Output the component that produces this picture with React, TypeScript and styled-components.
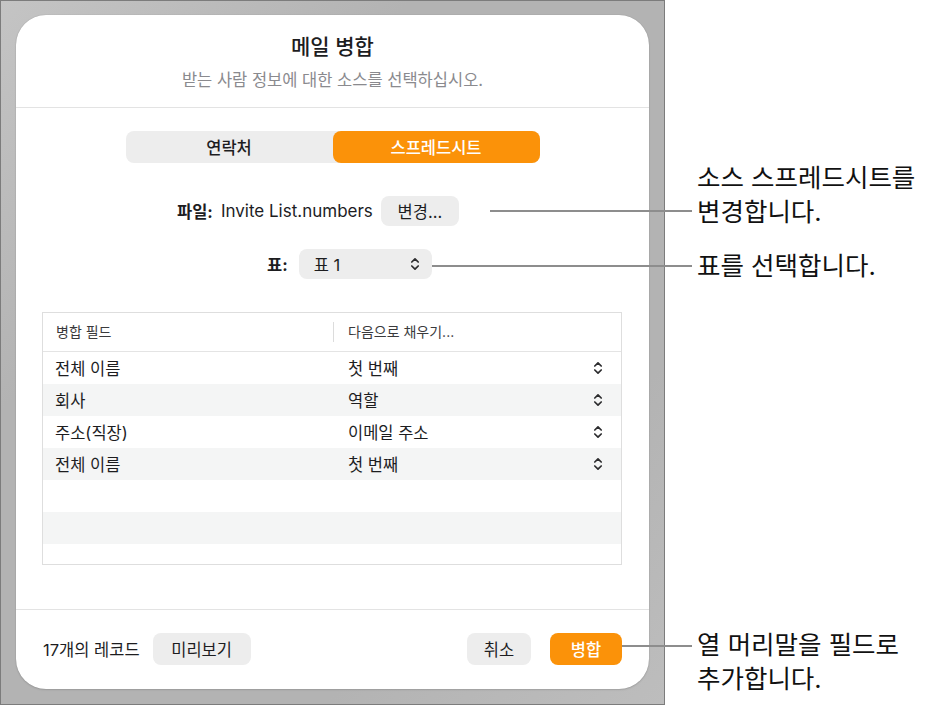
import React from "react";
import styled, { createGlobalStyle } from "styled-components";

const GlobalStyle = createGlobalStyle`
  html, body { margin: 0; padding: 0; background: #ffffff; }
  body {
    font-family: "Inter", "Noto Sans CJK KR", "Noto Sans", sans-serif;
    color: #1d1d1f;
    -webkit-font-smoothing: antialiased;
  }
`;

const Page = styled.div`
  position: relative;
  width: 928px;
  height: 705px;
  overflow: hidden;
`;

const Backdrop = styled.div`
  box-sizing: border-box;
  width: 665px;
  height: 705px;
  padding: 14px 15px 15px 15px;
  background: linear-gradient(135deg, #c4c4c4 0%, #b3b3b3 30%, #b3b3b3 75%, #bdbdbd 100%);
  border: 1px solid #7c7c7c;
`;

const Dialog = styled.div`
  box-sizing: border-box;
  width: 633px;
  height: 674px;
  background: #ffffff;
  border-radius: 30px;
  box-shadow: 0 0 1px rgba(0, 0, 0, 0.25), 0 1px 2px rgba(0, 0, 0, 0.12);
  display: flex;
  flex-direction: column;
  overflow: hidden;
`;

const Header = styled.header`
  display: flex;
  flex-direction: column;
  align-items: center;
  height: 93px;
  box-sizing: border-box;
  padding-top: 19px;
  border-bottom: 1px solid #e3e3e3;
`;

const Title = styled.h1`
  margin: 0;
  font-size: 21px;
  line-height: 26px;
  font-weight: 500;
  color: #1d1d1f;
`;

const Subtitle = styled.p`
  margin: 9px 0 0;
  font-size: 16.5px;
  line-height: 22px;
  color: #8a8a8e;
`;

const Body = styled.main`
  flex: 1;
  display: flex;
  flex-direction: column;
  padding: 23px 26px 0 26px;
`;

const Segmented = styled.div`
  align-self: center;
  display: grid;
  grid-template-columns: 1fr 1fr;
  width: 414px;
  height: 32px;
  background: #ededed;
  border-radius: 8px;
`;

const Segment = styled.button<{ $active?: boolean }>`
  border: none;
  margin: 0;
  padding: 0;
  font: inherit;
  font-size: 16.5px;
  font-weight: 500;
  border-radius: 8px;
  background: ${(p) => (p.$active ? "#fb9209" : "transparent")};
  color: ${(p) => (p.$active ? "#ffffff" : "#1d1d1f")};
`;

const FieldRow = styled.div<{ $indent: number; $top: number }>`
  display: flex;
  align-items: center;
  height: 30px;
  margin-top: ${(p) => p.$top}px;
  padding-left: ${(p) => p.$indent}px;
  font-size: 16.5px;
`;

const Label = styled.span<{ $gap: number }>`
  font-weight: 700;
  margin-right: ${(p) => p.$gap}px;
`;

const Value = styled.span`
  margin-right: 8px;
  font-size: 17px;
`;

const GrayButton = styled.button<{ $w: number; $h?: number }>`
  box-sizing: border-box;
  width: ${(p) => p.$w}px;
  height: ${(p) => p.$h ?? 30}px;
  border: none;
  border-radius: 8px;
  background: #ededed;
  color: #1d1d1f;
  font: inherit;
  font-size: 16.5px;
  padding: 0;
`;

const PopUp = styled.div`
  box-sizing: border-box;
  display: flex;
  align-items: center;
  justify-content: space-between;
  width: 133px;
  height: 30px;
  padding: 0 12px 0 15px;
  border-radius: 8px;
  background: #ededed;
  font-size: 16.5px;
`;

const Table = styled.div`
  box-sizing: border-box;
  margin-top: 33px;
  width: 580px;
  height: 253px;
  border: 1px solid #dedede;
  overflow: hidden;
`;

const HeadRow = styled.div`
  display: grid;
  grid-template-columns: 290px 1fr;
  align-items: center;
  height: 38px;
  border-bottom: 1px solid #e4e4e4;
  font-size: 14px;
  color: #3a3a3c;
`;

const HeadCell = styled.div<{ $divider?: boolean }>`
  padding-left: ${(p) => (p.$divider ? 14 : 13)}px;
  border-left: ${(p) => (p.$divider ? "1px solid #dcdcdc" : "none")};
  line-height: 20px;
`;

const Row = styled.div<{ $shade: boolean }>`
  display: grid;
  grid-template-columns: 290px 1fr 40px;
  align-items: center;
  height: 32px;
  background: ${(p) => (p.$shade ? "#f4f5f5" : "#ffffff")};
  font-size: 16.5px;
`;

const Cell = styled.div<{ $pad: number }>`
  padding-left: ${(p) => p.$pad}px;
`;

const ChevronCell = styled.div`
  display: flex;
  justify-content: center;
  padding-right: 6px;
`;

const Footer = styled.footer`
  display: flex;
  align-items: center;
  height: 80px;
  box-sizing: border-box;
  padding: 0 27px 2px 27px;
  border-top: 1px solid #e3e3e3;
  font-size: 16.5px;
`;

const Count = styled.span`
  margin-right: 13px;
`;

const Spacer = styled.div`
  flex: 1;
`;

const PrimaryButton = styled.button`
  width: 72px;
  height: 32px;
  margin-left: 19px;
  border: none;
  border-radius: 8px;
  background: #fb9209;
  color: #ffffff;
  font: inherit;
  font-size: 16.5px;
  font-weight: 500;
  padding: 0;
`;

/* Leader lines and notes drawn over the page */
const Leader = styled.div<{ $x: number; $y: number; $w: number }>`
  position: absolute;
  left: ${(p) => p.$x}px;
  top: ${(p) => p.$y - 1}px;
  width: ${(p) => p.$w}px;
  height: 2px;
  background: #8d8d8d;
`;

const Note = styled.div<{ $y: number }>`
  position: absolute;
  left: 697px;
  top: ${(p) => p.$y}px;
  font-size: 25.5px;
  line-height: 34px;
  color: #111111;
  white-space: nowrap;
`;

const Chevrons = () => (
  <svg width="10" height="14" viewBox="0 0 10 14" fill="none">
    <path d="M1.8 5L5 1.8 8.2 5" stroke="#2c2c2e" strokeWidth="1.7" strokeLinecap="round" strokeLinejoin="round" />
    <path d="M1.8 9L5 12.2 8.2 9" stroke="#2c2c2e" strokeWidth="1.7" strokeLinecap="round" strokeLinejoin="round" />
  </svg>
);

const rows: [string, string][] = [
  ["전체 이름", "첫 번째"],
  ["회사", "역할"],
  ["주소(직장)", "이메일 주소"],
  ["전체 이름", "첫 번째"],
  ["", ""],
  ["", ""],
  ["", ""],
];

export default function App() {
  return (
    <Page>
      <GlobalStyle />
      <Backdrop>
        <Dialog>
          <Header>
            <Title>메일 병합</Title>
            <Subtitle>받는 사람 정보에 대한 소스를 선택하십시오.</Subtitle>
          </Header>
          <Body>
            <Segmented>
              <Segment>연락처</Segment>
              <Segment $active>스프레드시트</Segment>
            </Segmented>
            <FieldRow $indent={135} $top={33}>
              <Label $gap={8}>파일:</Label>
              <Value>Invite List.numbers</Value>
              <GrayButton $w={78}>변경...</GrayButton>
            </FieldRow>
            <FieldRow $indent={225} $top={23}>
              <Label $gap={11}>표:</Label>
              <PopUp>
                <span>표 1</span>
                <Chevrons />
              </PopUp>
            </FieldRow>
            <Table>
              <HeadRow>
                <HeadCell>병합 필드</HeadCell>
                <HeadCell $divider>다음으로 채우기...</HeadCell>
              </HeadRow>
              {rows.map(([field, source], i) => (
                <Row key={i} $shade={i % 2 === 1}>
                  <Cell $pad={12}>{field}</Cell>
                  <Cell $pad={15}>{source}</Cell>
                  <ChevronCell>{field ? <Chevrons /> : null}</ChevronCell>
                </Row>
              ))}
            </Table>
          </Body>
          <Footer>
            <Count>17개의 레코드</Count>
            <GrayButton $w={98} $h={32}>미리보기</GrayButton>
            <Spacer />
            <GrayButton $w={64} $h={32}>취소</GrayButton>
            <PrimaryButton>병합</PrimaryButton>
          </Footer>
        </Dialog>
      </Backdrop>

      <Leader $x={490} $y={211} $w={202} />
      <Leader $x={432} $y={266} $w={260} />
      <Leader $x={622} $y={646} $w={70} />
      <Note $y={161}>
        소스 스프레드시트를
        <br />
        변경합니다.
      </Note>
      <Note $y={249}>표를 선택합니다.</Note>
      <Note $y={628}>
        열 머리말을 필드로
        <br />
        추가합니다.
      </Note>
    </Page>
  );
}
